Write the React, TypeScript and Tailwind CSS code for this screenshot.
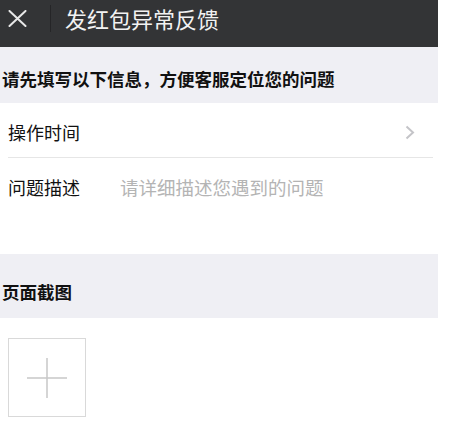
export default function App() {
  return (
    <div className="w-[461px] h-[425px] bg-white font-['Noto_Sans_CJK_SC','Noto_Sans',sans-serif]">
      <div className="w-[438px]">
        {/* header */}
        <div className="h-[47px] bg-[#333436]">
          <div className="flex h-[37px] items-center">
            <svg className="ml-[8px]" width="19" height="17" viewBox="0 0 19 17">
              <path d="M1.5 1 L17.5 16 M17.5 1 L1.5 16" stroke="#e8e8e8" strokeWidth="2" strokeLinecap="round" />
            </svg>
            <div className="ml-[23px] h-[27px] w-px bg-[#252527]" />
            <div className="ml-[14px] text-[22px] leading-[37px] text-[#f2f2f2]">发红包异常反馈</div>
          </div>
        </div>

        <div className="h-[56px] bg-[#efeff4] pl-[2px] pt-[20px]">
          <div className="text-[17.5px] font-bold leading-[24px] text-[#111]">请先填写以下信息，方便客服定位您的问题</div>
        </div>

        <div className="flex h-[54px] items-center justify-between pl-[8px] pr-[23px] pt-[4px]">
          <span className="text-[18px] text-[#111]">操作时间</span>
          <svg width="10" height="15" viewBox="0 0 10 15">
            <path d="M1.5 1.5 L8 7.5 L1.5 13.5" fill="none" stroke="#c4c4c8" strokeWidth="2" />
          </svg>
        </div>
        <div className="ml-[8px] mr-[5px] h-px bg-[#e6e6e6]" />

        <div className="flex h-[96px] items-start pl-[8px] pt-[17px]">
          <span className="w-[112px] text-[18px] leading-[24px] text-[#111]">问题描述</span>
          <span className="text-[18.5px] leading-[24px] text-[#b4b4b4]">请详细描述您遇到的问题</span>
        </div>

        <div className="h-[64px] bg-[#efeff4] pl-[2px] pt-[26px]">
          <div className="text-[17.5px] font-bold leading-[24px] text-[#111]">页面截图</div>
        </div>

        <div className="pl-[8px] pt-[20px]">
          <div className="flex h-[79px] w-[78px] items-center justify-center border border-[#d9d9d9]">
            <svg width="40" height="40" viewBox="0 0 40 40">
              <path d="M0 20 H40 M20 0 V40" stroke="#c8c8c8" strokeWidth="1.5" />
            </svg>
          </div>
        </div>
      </div>
    </div>
  );
}
